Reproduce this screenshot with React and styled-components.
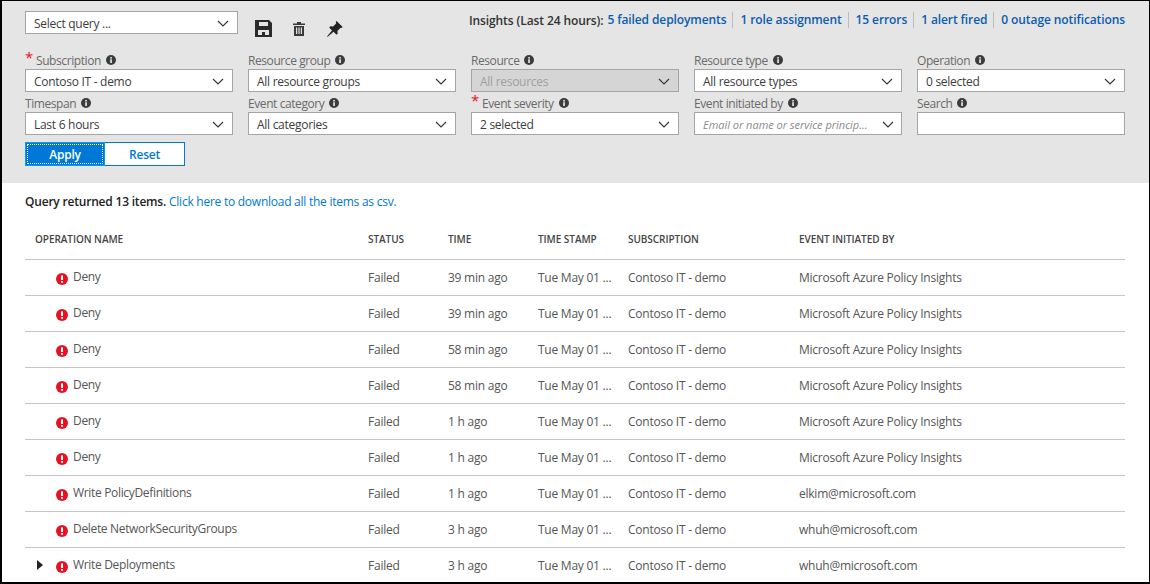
import React from "react";
import styled, { createGlobalStyle } from "styled-components";

const Global = createGlobalStyle`
  html, body { margin: 0; padding: 0; background: #fff; }
  * { box-sizing: border-box; }
  body { font-family: "Open Sans", "Liberation Sans", sans-serif; font-size: 12px; color: #3c3c3c; }
`;

const Frame = styled.div`
  width: 1150px; height: 584px; overflow: hidden; position: relative;
  border: 1px solid #000; border-width: 1px 1px 2px 2px; background: #fff;
`;
const FilterPanel = styled.div`
  height: 182px; background: #e5e5e5; padding: 10px 24px 0 23px;
`;
const TopBar = styled.div`display: flex; align-items: flex-start; height: 38px;`;
const IconGroup = styled.div`display: flex; align-items: center; margin-left: 7px; margin-top: 9px;`;
const IconSlot = styled.span`display: flex; width: 36px; justify-content: center;`;
const Insights = styled.div`
  margin-left: auto; margin-top: -1px; display: flex; align-items: center; height: 20px; white-space: nowrap;
  font-size: 12px; font-weight: 600; letter-spacing: -0.1px; color: #333;
`;
const InsightLink = styled.a`
  color: #0b5cad; padding: 0 6px 0 7px; border-left: ${p => p.$first ? "none" : "1px solid #bdbdbd"};
  line-height: 16px;
  &:first-of-type { padding-left: 4px; }
  &:last-child { padding-right: 0; }
`;
const Grid = styled.div`
  display: grid; grid-template-columns: repeat(5, 208px); column-gap: 15px;
`;
const Field = styled.div`display: flex; flex-direction: column;`;
const Label = styled.div`
  height: 20px; display: flex; align-items: center; gap: 5px; color: #6a6a6a; padding-top: 2px;
  font-size: 12px; letter-spacing: -0.42px; white-space: nowrap; position: relative;
  padding-left: ${p => p.$req ? 11 : 0}px;
`;
const Star = styled.span`
  position: absolute; left: 0; top: -1px; color: #e81123; font-size: 15px; line-height: 18px;
`;
const Select = styled.div`
  width: ${p => p.$w || 208}px; height: 23px; border: 1px solid #a5a5a5;
  background: ${p => p.$disabled ? "#d5d5d5" : "#fff"};
  color: ${p => p.$disabled ? "#a0a0a0" : p.$ph ? "#8a8a8a" : "#3c3c3c"};
  font-style: ${p => p.$ph ? "italic" : "normal"};
  font-size: ${p => p.$ph ? 11 : 12}px;
  display: flex; align-items: center; justify-content: space-between;
  padding: 1px ${p => p.$ph ? 7 : 8}px 0 8px; white-space: nowrap; letter-spacing: ${p => p.$ph ? -0.02 : -0.28}px;
`;
const Buttons = styled.div`display: flex; margin-top: 7px;`;
const Btn = styled.button`
  width: 80px; height: 24px; font: inherit; font-size: 12px; font-weight: 600; letter-spacing: -0.2px; padding: 0;
  border: 1px solid #0078d7; cursor: pointer; position: relative;
  background: ${p => p.$primary ? "#0078d7" : "#fff"};
  color: ${p => p.$primary ? "#fff" : "#0078d7"};
  ${p => p.$primary && `outline: 1px dotted #fff; outline-offset: -3px; border-color: #00a0e8;`}
  ${p => !p.$primary && `border-left: none;`}
`;
const Results = styled.div`padding: 0 24px 0 23px;`;
const Summary = styled.div`
  height: 38px; padding-top: 10px; font-size: 12px; letter-spacing: -0.2px; color: #333; white-space: nowrap;
`;
const Bold = styled.b`font-weight: 600; color: #222;`;
const DlLink = styled.a`color: #0078d7; letter-spacing: -0.25px;`;
const COLS = "343px 80px 90px 90px 171px 1fr";
const HeadRow = styled.div`
  display: grid; grid-template-columns: ${COLS}; height: 39px; align-items: center;
  border-bottom: 1px solid #c6c6c6; padding-bottom: 3px;
`;
const HeadCell = styled.div`
  font-size: 10px; font-weight: 600; color: #444; letter-spacing: -0.05px; white-space: nowrap;
  padding-left: ${p => p.$first ? 10 : 0}px;
`;
const Row = styled.div`
  display: grid; grid-template-columns: ${COLS}; height: 36px; align-items: center;
  border-bottom: 1px solid #c6c6c6; padding-bottom: 1px;
`;
const Cell = styled.div`color: #555; letter-spacing: -0.24px; white-space: nowrap; font-size: 12px;`;
const NameCell = styled.div`
  display: flex; align-items: center; position: relative; padding-left: 31px; color: #555;
  letter-spacing: -0.33px; white-space: nowrap; font-size: 12px;
`;
const NameText = styled.span`margin-left: 5px; margin-top: -1px;`;
const Caret = styled.span`
  position: absolute; left: 12px; top: 3px; width: 0; height: 0;
  border-left: 6px solid #222; border-top: 5px solid transparent; border-bottom: 5px solid transparent;
`;

const Chevron = () => (
  <svg width="12" height="7" viewBox="0 0 12 7" fill="none" stroke="#333" strokeWidth="1.1"><path d="M1 1l5 5 5-5" /></svg>
);
const Info = () => (
  <svg width="10" height="10" viewBox="0 0 10 10">
    <circle cx="5" cy="5" r="5" fill="#3c3c3c" />
    <rect x="4.2" y="4.2" width="1.7" height="3.8" fill="#e5e5e5" />
    <rect x="4.2" y="2" width="1.7" height="1.5" fill="#e5e5e5" />
  </svg>
);
const ErrorIcon = () => (
  <svg width="12" height="12" viewBox="0 0 12 12" style={{ marginTop: 3, flex: "none" }}>
    <circle cx="6" cy="6" r="6" fill="#e81123" />
    <rect x="5" y="2.4" width="2" height="4.6" fill="#fff" />
    <rect x="5" y="8" width="2" height="1.8" fill="#fff" />
  </svg>
);
const SaveIcon = () => (
  <svg width="17" height="17" viewBox="0 0 17 17">
    <path fillRule="evenodd" fill="#2b2b2b" d="M0 0h14l3 3v14H0zM4 2v4h9V2zM3 10v5h11v-5z" />
    <rect x="7" y="12" width="3" height="3" fill="#2b2b2b" />
  </svg>
);
const TrashIcon = () => (
  <svg width="12" height="14" viewBox="0 0 12 14">
    <path fill="#3a3a3a" d="M4 0h4v1.5h4V3H0V1.5h4zM1 4h10v10H1z" />
    <path fill="#e5e5e5" d="M3 5.5h1.2V12H3zM5.4 5.5h1.2V12H5.4zM7.8 5.5H9V12H7.8z" />
  </svg>
);
const PinIcon = () => (
  <svg width="16" height="16" viewBox="0 0 16 16">
    <path fill="#222" d="M9.6 0l6 6-1 1-1-.3-3.2 3.2.3 2.6-1.2 1.2-2.9-2.9L1 15.6 0 16l.4-1L5 9.4 2.2 6.5l1.2-1.2 2.6.3L9.2 2.4 8.7 1z" />
  </svg>
);

const filters = [
  { label: "Subscription", value: "Contoso IT - demo", req: true },
  { label: "Resource group", value: "All resource groups" },
  { label: "Resource", value: "All resources", disabled: true },
  { label: "Resource type", value: "All resource types" },
  { label: "Operation", value: "0 selected" },
  { label: "Timespan", value: "Last 6 hours" },
  { label: "Event category", value: "All categories" },
  { label: "Event severity", value: "2 selected", req: true },
  { label: "Event initiated by", value: "Email or name or service princip...", ph: true },
  { label: "Search", value: "", noChevron: true },
];
const insights = ["5 failed deployments", "1 role assignment", "15 errors", "1 alert fired", "0 outage notifications"];
const P = "Microsoft Azure Policy Insights";
const rows = [
  ["Deny", "39 min ago", P], ["Deny", "39 min ago", P], ["Deny", "58 min ago", P], ["Deny", "58 min ago", P],
  ["Deny", "1 h ago", P], ["Deny", "1 h ago", P],
  ["Write PolicyDefinitions", "1 h ago", "elkim@microsoft.com"],
  ["Delete NetworkSecurityGroups", "3 h ago", "whuh@microsoft.com"],
  ["Write Deployments", "3 h ago", "whuh@microsoft.com", true],
];

export default function App() {
  return (
    <Frame>
      <Global />
      <FilterPanel>
        <TopBar>
          <Select $w={213}>Select query ...<Chevron /></Select>
          <IconGroup>
            <IconSlot><SaveIcon /></IconSlot>
            <IconSlot><TrashIcon /></IconSlot>
            <IconSlot><PinIcon /></IconSlot>
          </IconGroup>
          <Insights>
            Insights (Last 24 hours):
            {insights.map((t, i) => <InsightLink key={t} $first={i === 0}>{t}</InsightLink>)}
          </Insights>
        </TopBar>
        <Grid>
          {filters.map((f) => (
            <Field key={f.label}>
              <Label $req={f.req}>
                {f.req && <Star>*</Star>}
                {f.label}
                <Info />
              </Label>
              <Select $disabled={f.disabled} $ph={f.ph}>
                {f.value}
                {!f.noChevron && <Chevron />}
              </Select>
            </Field>
          ))}
        </Grid>
        <Buttons>
          <Btn $primary>Apply</Btn>
          <Btn>Reset</Btn>
        </Buttons>
      </FilterPanel>
      <Results>
        <Summary>
          <Bold>Query returned 13 items.</Bold> <DlLink>Click here to download all the items as csv.</DlLink>
        </Summary>
        <HeadRow>
          <HeadCell $first>OPERATION NAME</HeadCell>
          <HeadCell>STATUS</HeadCell>
          <HeadCell>TIME</HeadCell>
          <HeadCell>TIME STAMP</HeadCell>
          <HeadCell>SUBSCRIPTION</HeadCell>
          <HeadCell>EVENT INITIATED BY</HeadCell>
        </HeadRow>
        {rows.map((r, i) => (
          <Row key={i}>
            <NameCell>
              {r[3] && <Caret />}
              <ErrorIcon />
              <NameText>{r[0]}</NameText>
            </NameCell>
            <Cell>Failed</Cell>
            <Cell>{r[1]}</Cell>
            <Cell>Tue May 01 ...</Cell>
            <Cell>Contoso IT - demo</Cell>
            <Cell>{r[2]}</Cell>
          </Row>
        ))}
      </Results>
    </Frame>
  );
}
